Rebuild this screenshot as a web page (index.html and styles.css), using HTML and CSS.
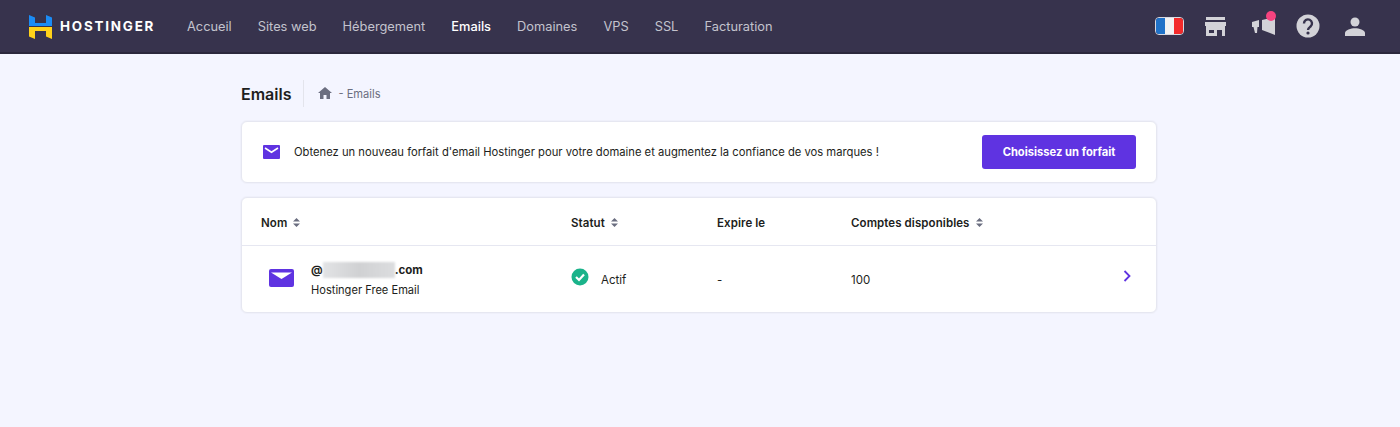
FILE: index.html
```html
<!DOCTYPE html>
<html lang="fr">
<head>
<meta charset="utf-8">
<title>Emails</title>
<link rel="stylesheet" href="styles.css">
</head>
<body>
<header class="topbar">
  <div class="brand">
    <svg class="logo" width="23" height="25" viewBox="0 0 23 25">
      <path fill="#1b8cf5" d="M0 1l6 2.500v5.500h11V1l6 2.500V12H0z"/>
      <path fill="#ffd21a" d="M0 13h23v12l-6-2.500V17H6v8l-6-2.500z"/>
    </svg>
    <span class="brand-name">HOSTINGER</span>
  </div>
  <nav class="nav">
    <a class="nav-item">Accueil</a>
    <a class="nav-item">Sites web</a>
    <a class="nav-item">Hébergement</a>
    <a class="nav-item active">Emails</a>
    <a class="nav-item">Domaines</a>
    <a class="nav-item">VPS</a>
    <a class="nav-item">SSL</a>
    <a class="nav-item">Facturation</a>
  </nav>
  <div class="tools">
    <div class="flag"><span class="flag-blue"></span><span class="flag-white"></span><span class="flag-red"></span></div>
    <svg class="store" width="21" height="19" viewBox="0 0 21 19"><path fill="#d3d3d8" fill-rule="evenodd" d="M1 0h19v3H1zM0 5h21v4h-1v10h-3v-6h-5v6H1V9H0zM4 13h5v3H4z"/></svg>
    <div class="megaphone">
      <svg width="23" height="19" viewBox="0 0 23 19"><path fill="#d3d3d8" d="M0 5l7-2v7H5.500L5 16H3L1.500 10H0zM10 3L23 0v18L10 13z"/></svg>
      <span class="dot"></span>
    </div>
    <svg class="help" width="24" height="24" viewBox="0 0 24 24"><circle cx="12" cy="12" r="11.500" fill="#d3d3d8"/><path fill="none" stroke="#37334d" stroke-width="2.400" d="M8 9.500a4 4 0 1 1 6.500 3c-1.500 1.200-2.500 1.800-2.500 3.500"/><circle cx="12" cy="19" r="1.600" fill="#37334d"/></svg>
    <svg width="20" height="19" viewBox="0 0 20 19"><circle cx="10" cy="5" r="4.500" fill="#d3d3d8"/><path fill="#d3d3d8" d="M0 19v-3c0-3 6-4.800 10-4.800S20 13 20 16v3z"/></svg>
  </div>
</header>
<main class="content">
  <div class="title-row">
    <h1 class="page-title">Emails</h1>
    <div class="crumbs">
      <svg class="home" width="14" height="12" viewBox="0 0 14 12"><path fill="#6b6e80" d="M7 0l7 6h-2v6H8.500V8h-3v4H2V6H0z"/></svg>
      <span>- Emails</span>
    </div>
  </div>
  <section class="card banner">
    <svg class="mail-small" width="17" height="14" viewBox="0 0 17 14"><rect width="17" height="14" rx="1" fill="#5f33e1"/><path fill="none" stroke="#fff" stroke-width="1.600" d="M2 3l6.500 4.200L15 3"/></svg>
    <p class="banner-text">Obtenez un nouveau forfait d'email Hostinger pour votre domaine et augmentez la confiance de vos marques !</p>
    <button class="cta">Choisissez un forfait</button>
  </section>
  <section class="card table">
    <div class="row head">
      <div class="col-name">Nom <svg class="sort" width="7" height="9" viewBox="0 0 7 9"><path fill="#6b6e80" d="M3.500 0L7 3.500H0zM3.500 9L0 5.500h7z"/></svg></div>
      <div class="col-status">Statut <svg class="sort" width="7" height="9" viewBox="0 0 7 9"><path fill="#6b6e80" d="M3.500 0L7 3.500H0zM3.500 9L0 5.500h7z"/></svg></div>
      <div class="col-exp">Expire le</div>
      <div class="col-acc">Comptes disponibles <svg class="sort" width="7" height="9" viewBox="0 0 7 9"><path fill="#6b6e80" d="M3.500 0L7 3.500H0zM3.500 9L0 5.500h7z"/></svg></div>
    </div>
    <div class="row body">
      <div class="col-name cell-name">
        <svg class="mail-big" width="25" height="18" viewBox="0 0 25 18"><rect width="25" height="18" rx="2" fill="#5f33e1"/><path fill="#fff" d="M2 3.500h21L12.500 10z"/></svg>
        <div>
          <div class="domain">@<span class="blur"></span>.com</div>
          <div class="plan">Hostinger Free Email</div>
        </div>
      </div>
      <div class="col-status cell-status">
        <svg class="check" width="18" height="18" viewBox="0 0 18 18"><circle cx="9" cy="9" r="8.500" fill="#1ab38a"/><path fill="none" stroke="#fff" stroke-width="2.200" d="M5 9l3 3 5-5.500"/></svg>
        <span>Actif</span>
      </div>
      <div class="col-exp">-</div>
      <div class="col-acc">100</div>
      <svg class="chevron" width="8" height="12" viewBox="0 0 8 12"><path fill="none" stroke="#5f33e1" stroke-width="1.800" d="M1.500 1l5 5-5 5"/></svg>
    </div>
  </section>
</main>
</body>
</html>
```
FILE: styles.css
```css
* { box-sizing: border-box; }
html, body { margin: 0; height: 100%; overflow: hidden; }
body {
  background: #f4f5ff;
  font-family: "Inter", "Liberation Sans", sans-serif;
  color: #1d1e20;
  font-size: 12px;
}
.topbar {
  height: 54px;
  background: #37334d;
  border-bottom: 2px solid #2b283d;
  display: flex;
  align-items: center;
  padding: 0 35px 0 29px;
}
.brand { display: flex; align-items: center; gap: 8px; width: 158px; }
.logo { flex: none; }
.brand-name { color: #fff; font-weight: 700; font-size: 13.400px; letter-spacing: 1.800px; }
.nav { display: flex; gap: 26.100px; flex: 1; }
.nav-item { color: #c3c3cd; font-size: 12.800px; }
.nav-item.active { color: #fff; font-weight: 500; }
.tools { display: flex; align-items: center; gap: 21px; }
.flag { width: 29px; height: 18px; border-radius: 4px; overflow: hidden; display: flex; border: 1px solid #d8d8e0; }
.flag span { flex: 1; }
.flag-blue { background: #2072c8; }
.flag-white { background: #f2f2f2; }
.flag-red { background: #f32a2a; }
.store { margin-right: 5px; }
.help { margin-right: 4px; }
.megaphone { position: relative; display: flex; }
.dot { position: absolute; top: -6px; right: -1px; width: 10px; height: 10px; border-radius: 50%; background: #f6437f; }
.content { width: 916px; margin: 26px auto 0 241px; }
.title-row { display: flex; align-items: center; height: 27px; }
.page-title { margin: 0; font-size: 16px; font-weight: 600; padding: 1px 12px 0 0; line-height: 26px; border-right: 1px solid #e3e4ec; color: #1d1e20; }
.crumbs { display: flex; align-items: center; gap: 6px; padding: 1px 0 0 14px; color: #6b6e80; font-size: 11.100px; }
.home { margin-bottom: 3px; }
.card { background: #fff; border: 1px solid #e6e7f1; border-radius: 6px; box-shadow: 0 0 0 1px #eff0fa; }
.banner { display: flex; align-items: center; height: 62px; margin-top: 14px; padding: 0 20px 0 21px; }
.mail-small { flex: none; }
.banner-text { margin: 0 0 0 14px; flex: 1; font-size: 11.230px; color: #1d1e20; }
.cta { width: 154px; height: 34px; border: none; border-radius: 3px; background: #5f33e1; color: #fff; font: 700 11.200px "Inter", "Liberation Sans", sans-serif; }
.table { margin-top: 14px; height: 116px; }
.row { display: flex; align-items: center; position: relative; padding-left: 19px; }
.head { height: 48px; border-bottom: 1px solid #e6e7f1; font-weight: 600; font-size: 11.500px; letter-spacing: 0.080px; padding-top: 3px; }
.sort { margin-left: 3px; }
.col-name { width: 310px; }
.col-status { width: 146px; }
.col-exp { width: 134px; }
.col-acc { flex: 1; }
.body { height: 66px; font-size: 11.500px; padding-top: 2px; }
.cell-name { display: flex; align-items: center; gap: 17px; padding-left: 8px; margin-top: -2px; }
.mail-big { margin-bottom: 3px; }
.domain { font-weight: 700; display: flex; align-items: center; height: 16px; }
.blur { display: inline-block; width: 72px; height: 16px; background: linear-gradient(90deg, #e2e3e5, #d0d1d3 50%, #dcdddf); filter: blur(1px); }
.plan { margin-top: 5px; font-size: 11.100px; }
.cell-status { display: flex; align-items: center; gap: 12px; }
.check { margin-bottom: 6px; }
.chevron { position: absolute; right: 25px; top: 24px; }
```
